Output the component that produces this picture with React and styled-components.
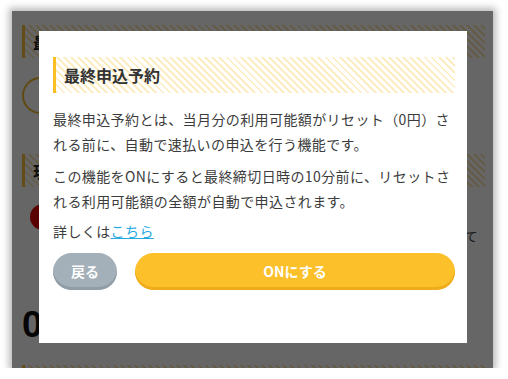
import React from 'react'
import styled, { createGlobalStyle } from 'styled-components'

const Global = createGlobalStyle`
  html, body {
    margin: 0;
    padding: 0;
    background: #ffffff;
  }
  body {
    font-family: "Noto Sans CJK JP", "Noto Sans", sans-serif;
    color: #3c3c3c;
  }
`

const stripes = (c) => `repeating-linear-gradient(45deg, ${c} 0 2px, #ffffff 2px 5px)`

const Frame = styled.div`
  position: relative;
  width: 481px;
  height: 357px;
  margin: 11px 0 0 12px;
  background: #ffffff;
  overflow: hidden;
  box-shadow: 0 0 7px 3px rgba(0, 0, 0, 0.28);
`

const Page = styled.div`
  padding: 14px 8px 0 10px;
`

const SectionTitle = styled.h2`
  margin: ${(p) => p.$top || 0}px 0 0;
  height: 33px;
  display: flex;
  align-items: center;
  padding-left: 8px;
  border-left: 3px solid #f5c040;
  background: ${stripes('#fbe6b0')};
  font-size: 16px;
  font-weight: 700;
  color: #222;
`

const Toggle = styled.div`
  margin-top: 19px;
  width: 33px;
  height: 33px;
  border-radius: 50%;
  border: 2px solid #f0b830;
`

const StatusRow = styled.div`
  display: flex;
  gap: 6px;
  margin-top: 16px;
  padding-left: 8px;
`

const Dot = styled.span`
  flex: none;
  width: 26px;
  height: 26px;
  margin-top: 1px;
  border-radius: 50%;
  background: #e00000;
`

const StatusText = styled.div`
  font-size: 13px;
  line-height: 22px;
  b { display: block; }
`

const Amount = styled.div`
  margin-top: 36px;
  font-family: "Liberation Sans", Arial, sans-serif;
  font-size: 37px;
  font-weight: 700;
  line-height: 40px;
  color: #111;
`

const Overlay = styled.div`
  position: absolute;
  inset: 0;
  background: rgba(0, 0, 0, 0.6);
  display: flex;
  justify-content: flex-start;
  align-items: flex-start;
  padding: 20px 0 0 27px;
`

const Modal = styled.div`
  width: 428px;
  height: 312px;
  box-sizing: border-box;
  padding: 26px 12px 0 14px;
  background: #ffffff;
`

const ModalTitle = styled.h3`
  margin: 0;
  height: 36px;
  display: flex;
  align-items: center;
  padding-left: 8px;
  border-left: 3px solid #fbbf24;
  background: ${stripes('#fdedc4')};
  font-size: 16px;
  font-weight: 700;
  color: #333;
`

const Text = styled.p`
  margin: ${(p) => p.$top}px 0 0;
  font-size: 14px;
  line-height: 25px;
  letter-spacing: 0.4px;
`

const Link = styled.a`
  color: #29a9e1;
  text-decoration: underline;
`

const Actions = styled.div`
  display: flex;
  gap: 18px;
  margin-top: 9px;
`

const Button = styled.button`
  flex: ${(p) => (p.$grow ? 1 : 'none')};
  width: ${(p) => (p.$grow ? 'auto' : '64px')};
  height: 37px;
  border: none;
  border-radius: 19px;
  background: ${(p) => p.$bg};
  box-shadow: inset 0 -3px 0 ${(p) => p.$edge};
  color: #ffffff;
  font-family: inherit;
  font-size: 14px;
  font-weight: 700;
  padding: 0 0 2px;
  cursor: pointer;
`

export default function App() {
  return (
    <>
      <Global />
      <Frame>
        <Page>
          <SectionTitle>最終申込予約</SectionTitle>
          <Toggle />
          <SectionTitle $top={40}>現在の利用可能額</SectionTitle>
          <StatusRow>
            <Dot />
            <StatusText>
              <b>リセット予定</b>
              速払いの申込がない場合、当月分の利用可能額は自動でリセットされて残高が０円になります。
            </StatusText>
          </StatusRow>
          <Amount>0円</Amount>
          <SectionTitle $top={20}>速払い申込</SectionTitle>
        </Page>
        <Overlay>
          <Modal>
            <ModalTitle>最終申込予約</ModalTitle>
            <Text $top={14}>
              最終申込予約とは、当月分の利用可能額がリセット（0円）される前に、自動で速払いの申込を行う機能です。
            </Text>
            <Text $top={7}>
              この機能をONにすると最終締切日時の10分前に、リセットされる利用可能額の全額が自動で申込されます。
            </Text>
            <Text $top={5}>
              詳しくは<Link href="#">こちら</Link>
            </Text>
            <Actions>
              <Button $bg="#a4b0b9" $edge="#919da6">戻る</Button>
              <Button $grow $bg="#fbc02a" $edge="#eeac1c">ONにする</Button>
            </Actions>
          </Modal>
        </Overlay>
      </Frame>
    </>
  )
}
